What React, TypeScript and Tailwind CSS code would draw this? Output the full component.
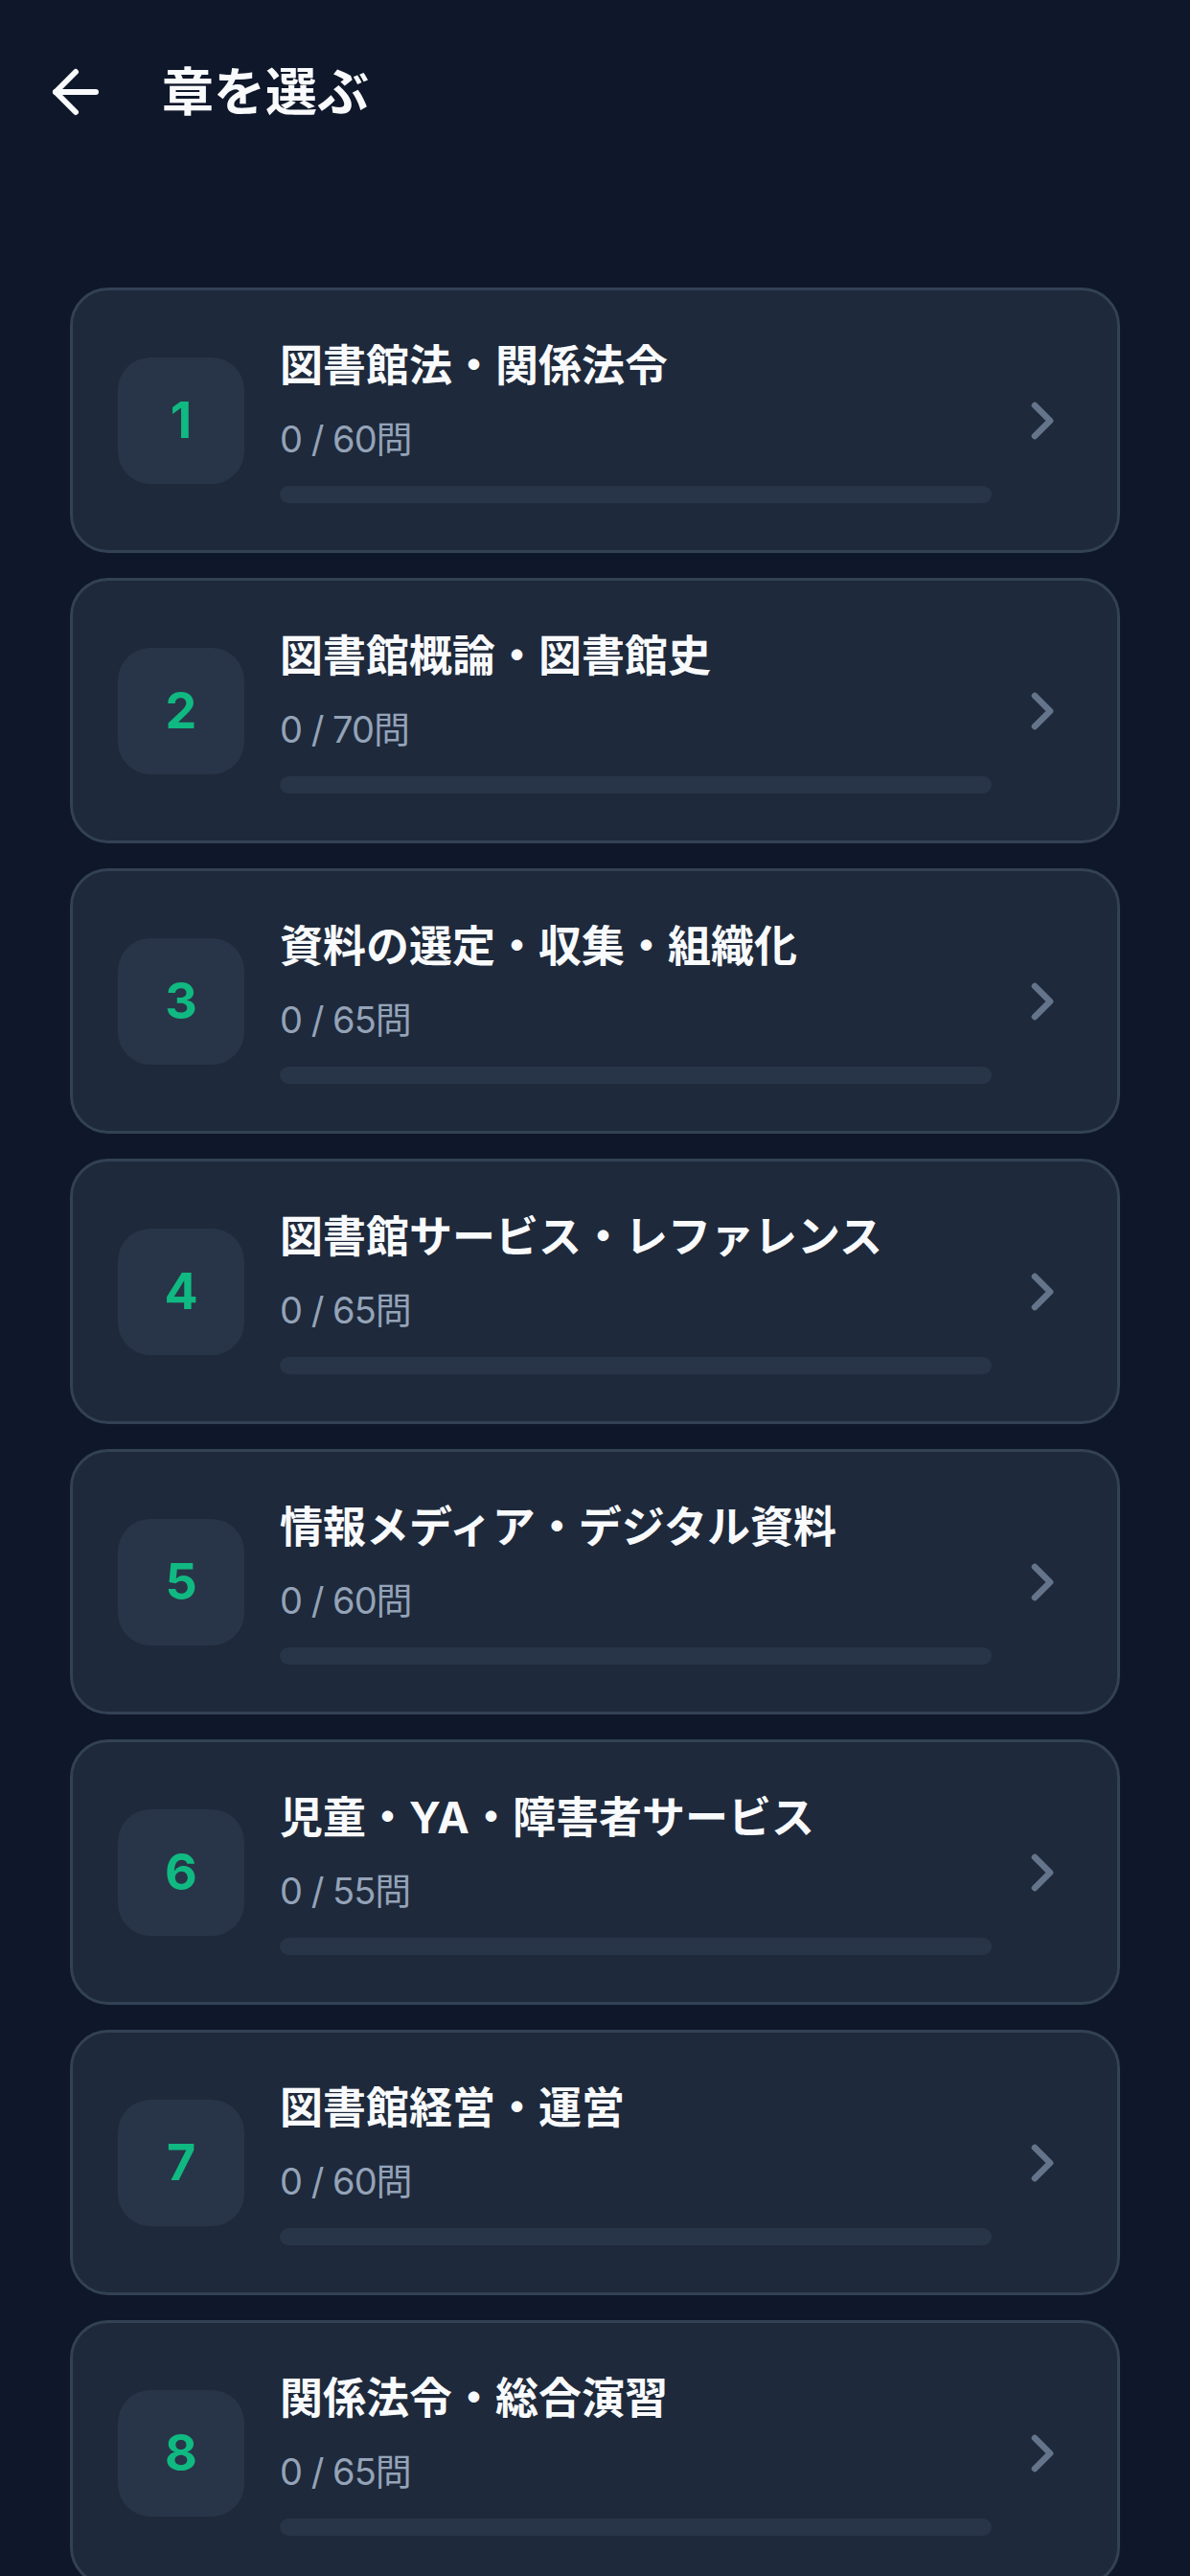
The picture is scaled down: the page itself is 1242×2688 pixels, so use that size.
import React from 'react';
import { ArrowLeft, ChevronRight } from 'lucide-react';

interface Chapter {
    id: number;
    title: string;
    total: number;
    done: number;
}

const chapters: Chapter[] = [
    { id: 1, title: '図書館法・関係法令', total: 60, done: 0 },
    { id: 2, title: '図書館概論・図書館史', total: 70, done: 0 },
    { id: 3, title: '資料の選定・収集・組織化', total: 65, done: 0 },
    { id: 4, title: '図書館サービス・レファレンス', total: 65, done: 0 },
    { id: 5, title: '情報メディア・デジタル資料', total: 60, done: 0 },
    { id: 6, title: '児童・YA・障害者サービス', total: 55, done: 0 },
    { id: 7, title: '図書館経営・運営', total: 60, done: 0 },
    { id: 8, title: '関係法令・総合演習', total: 65, done: 0 },
];

const font = { fontFamily: '"Inter", "Noto Sans CJK JP", sans-serif' };

const ChapterCard: React.FC<{ chapter: Chapter }> = ({ chapter }) => {
    const pct = chapter.total ? (chapter.done / chapter.total) * 100 : 0;
    return (
        <button className="mx-[73px] flex shrink-0 items-center rounded-[40px] border-[3px] border-[#334155] bg-[#1e293b] py-[49px] pl-[47px] pr-[46px] text-left">
            <div className="flex h-[132px] w-[132px] shrink-0 items-center justify-center rounded-[34px] bg-[#283548] text-[52px] font-bold text-[#10b981]">
                {chapter.id}
            </div>
            <div className="ml-[37px] min-w-0 flex-1">
                <h2 className="text-[45px] font-bold leading-[60px] text-[#f8fafc]">{chapter.title}</h2>
                <p className="mt-[20px] text-[38px] leading-[52px] tracking-[-1px] text-[#94a3b8]">
                    {chapter.done} / {chapter.total}問
                </p>
                <div className="mt-[23px] h-[18px] w-full overflow-hidden rounded-full bg-[#283548]">
                    <div className="h-full rounded-full bg-[#10b981]" style={{ width: `${pct}%` }} />
                </div>
            </div>
            <ChevronRight size={64} strokeWidth={2.5} className="ml-[21px] shrink-0 text-[#64748b]" />
        </button>
    );
};

export default function App() {
    return (
        <div className="flex h-screen w-full flex-col overflow-hidden bg-[#0f172a]" style={font}>
            {/* Header */}
            <div className="flex h-[192px] shrink-0 items-center pl-[43px]">
                <ArrowLeft size={72} strokeWidth={2} className="text-[#f8fafc]" />
                <h1 className="ml-[54px] text-[54px] font-bold text-[#f8fafc]">章を選ぶ</h1>
            </div>

            {/* Chapter list */}
            <div className="flex flex-col gap-[26px] pt-[108px]">
                {chapters.map((c) => (
                    <ChapterCard key={c.id} chapter={c} />
                ))}
            </div>
        </div>
    );
}
